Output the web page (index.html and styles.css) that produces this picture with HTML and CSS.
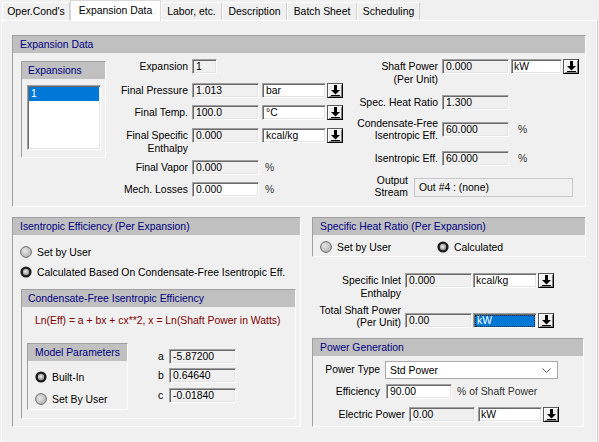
FILE: index.html
```html
<!DOCTYPE html>
<html>
<head>
<meta charset="utf-8">
<link rel="stylesheet" href="styles.css">
</head>
<body>
<svg class="defs" width="0" height="0">
  <defs>
    <radialGradient id="gOff" cx="0.4" cy="0.4" r="0.6">
      <stop offset="0" stop-color="#e6e6e6"/>
      <stop offset="1" stop-color="#b4b4b4"/>
    </radialGradient>
    <radialGradient id="gOn" cx="0.45" cy="0.45" r="0.6">
      <stop offset="0" stop-color="#f0f0f0"/>
      <stop offset="1" stop-color="#8a8a8a"/>
    </radialGradient>
    <symbol id="rOff" viewBox="0 0 12 12">
      <circle cx="6" cy="6" r="5.4" fill="url(#gOff)" stroke="#6e6e6e" stroke-width="1"/>
    </symbol>
    <symbol id="rOn" viewBox="0 0 12 12">
      <circle cx="6" cy="6" r="5.6" fill="#1c1c1c"/>
      <circle cx="6" cy="6" r="3.2" fill="url(#gOn)"/>
    </symbol>
    <symbol id="arr" viewBox="0 0 9 11">
      <rect x="3" y="0" width="3" height="5" fill="#000"/>
      <polygon points="0,5 9,5 4.5,9.5" fill="#000"/>
      <rect x="0" y="10" width="9" height="1" fill="#000"/>
    </symbol>
  </defs>
</svg>

<div class="tabs">
  <div class="tab t1">Oper.Cond's</div>
  <div class="tab t2 active">Expansion Data</div>
  <div class="tab t3">Labor, etc.</div>
  <div class="tab t4">Description</div>
  <div class="tab t5">Batch Sheet</div>
  <div class="tab t6">Scheduling</div>
</div>

<div class="panel">
  <section class="group g-exp">
    <div class="ghead">Expansion Data</div>
    <div class="exp-body">
      <div class="explist">
        <div class="lhead">Expansions</div>
        <div class="listbox"><div class="litem">1</div></div>
      </div>

      <div class="colB">
        <div class="row rb1"><div class="lbl lb">Expansion</div><div class="f fs">1</div></div>
        <div class="row rb2"><div class="lbl lb">Final Pressure</div><div class="f">1.013</div><div class="combo cb">bar</div><div class="btn"><svg width="9" height="11"><use href="#arr"/></svg></div></div>
        <div class="row rb3"><div class="lbl lb">Final Temp.</div><div class="f">100.0</div><div class="combo cb">°C</div><div class="btn"><svg width="9" height="11"><use href="#arr"/></svg></div></div>
        <div class="row rb4"><div class="lbl lb">Final Specific<br>Enthalpy</div><div class="f">0.000</div><div class="combo cb">kcal/kg</div><div class="btn"><svg width="9" height="11"><use href="#arr"/></svg></div></div>
        <div class="row rb5"><div class="lbl lb">Final Vapor</div><div class="f">0.000</div><div class="unit ub">%</div></div>
        <div class="row rb6"><div class="lbl lb">Mech. Losses</div><div class="f w">0.000</div><div class="unit ub">%</div></div>
      </div>

      <div class="colC">
        <div class="row rc1"><div class="lbl lc">Shaft Power<br>(Per Unit)</div><div class="f">0.000</div><div class="combo cc">kW</div><div class="btn"><svg width="9" height="11"><use href="#arr"/></svg></div></div>
        <div class="row rc2"><div class="lbl lc">Spec. Heat Ratio</div><div class="f">1.300</div></div>
        <div class="row rc3"><div class="lbl lc lmid">Condensate-Free<br>Isentropic Eff.</div><div class="f">60.000</div><div class="unit uc">%</div></div>
        <div class="row rc4"><div class="lbl lc">Isentropic Eff.</div><div class="f">60.000</div><div class="unit uc">%</div></div>
        <div class="row rc5"><div class="lbl lout">Output<br>Stream</div><div class="outbox">Out #4 : (none)</div></div>
      </div>
    </div>
  </section>

  <div class="lower">
    <section class="group g-isen">
      <div class="ghead">Isentropic Efficiency (Per Expansion)</div>
      <div class="radio r-i1"><svg width="12" height="12"><use href="#rOff"/></svg><span>Set by User</span></div>
      <div class="radio r-i2"><svg width="12" height="12"><use href="#rOn"/></svg><span>Calculated Based On Condensate-Free Isentropic Eff.</span></div>

      <section class="group g-cf">
        <div class="ghead gh-cf">Condensate-Free Isentropic Efficiency</div>
        <div class="formula">Ln(Eff) = a + bx + cx**2, x = Ln(Shaft Power in Watts)</div>
        <div class="cf-low">
          <section class="group g-mp">
            <div class="ghead">Model Parameters</div>
            <div class="radio r-m1"><svg width="12" height="12"><use href="#rOn"/></svg><span>Built-In</span></div>
            <div class="radio r-m2"><svg width="12" height="12"><use href="#rOff"/></svg><span>Set By User</span></div>
          </section>
          <div class="abc">
            <div class="row ra"><div class="albl">a</div><div class="f">-5.87200</div></div>
            <div class="row rbb"><div class="albl">b</div><div class="f">0.64640</div></div>
            <div class="row rcc"><div class="albl">c</div><div class="f">-0.01840</div></div>
          </div>
        </div>
      </section>
    </section>

    <div class="rcol">
      <section class="group g-shr">
        <div class="ghead">Specific Heat Ratio (Per Expansion)</div>
        <div class="shr-body">
          <div class="radio r-s1"><svg width="12" height="12"><use href="#rOff"/></svg><span>Set by User</span></div>
          <div class="radio r-s2"><svg width="12" height="12"><use href="#rOn"/></svg><span>Calculated</span></div>
        </div>
      </section>

      <div class="row rr1"><div class="lbl lr">Specific Inlet<br>Enthalpy</div><div class="f">0.000</div><div class="combo cr">kcal/kg</div><div class="btn"><svg width="9" height="11"><use href="#arr"/></svg></div></div>
      <div class="row rr2"><div class="lbl lr ltot">Total Shaft Power<br>(Per Unit)</div><div class="f">0.00</div><div class="combo cr sel"><span>kW</span></div><div class="btn"><svg width="9" height="11"><use href="#arr"/></svg></div></div>

      <section class="group g-pg">
        <div class="ghead">Power Generation</div>
        <div class="row rp1"><div class="lbl lp">Power Type</div><div class="select"><span>Std Power</span><svg width="9" height="5"><polyline points="0.5,0.5 4.5,4.5 8.5,0.5" fill="none" stroke="#555" stroke-width="1"/></svg></div></div>
        <div class="row rp2"><div class="lbl lp lp2">Efficiency</div><div class="f w fe">90.00</div><div class="unit up">% of Shaft Power</div></div>
        <div class="row rp3"><div class="lbl lpe">Electric Power</div><div class="f fe">0.00</div><div class="combo cr ce">kW</div><div class="btn"><svg width="9" height="11"><use href="#arr"/></svg></div></div>
      </section>
    </div>
  </div>
</div>
</body>
</html>
```

FILE: styles.css
```css
* { box-sizing: border-box; }

html, body {
  margin: 0;
  padding: 0;
}

body {
  width: 599px;
  height: 442px;
  overflow: hidden;
  background: #f0f0f0;
  font-family: "Liberation Sans", Arial, sans-serif;
  font-size: 10.4px;
  color: #000;
}

.defs { display: block; width: 0; height: 0; overflow: hidden; }

/* ---------- tabs ---------- */
.tabs {
  display: flex;
  height: 20px;
  padding-left: 2px;
  position: relative;
  z-index: 2;
}

.tab {
  height: 18px;
  margin-top: 2px;
  border-top: 1px solid #fff;
  border-left: 1px solid #fff;
  border-right: 1px solid #d0d0d0;
  line-height: 17px;
  text-align: center;
  white-space: nowrap;
  background: #f0f0f0;
}

.tab.active {
  height: 21px;
  margin-top: 0;
  line-height: 19px;
  background: #fff;
  border-color: #d9d9d9;
  border-bottom: none;
}

.t1 { width: 68px; }
.t2 { width: 91px; }
.t3 { width: 61px; }
.t4 { width: 65px; }
.t5 { width: 70px; }
.t6 { width: 63px; }

/* ---------- panel ---------- */
.panel {
  margin-left: 1px;
  width: 596px;
  height: 422px;
  border: 1px solid #fff;
  border-bottom: none;
  box-shadow: 1px 0 0 #cfcfcf;
  padding: 14px 0 0 10px;
}

/* ---------- groups ---------- */
.group {
  border-style: solid;
  border-width: 1px;
  border-color: #a0a0a0 #fff #fff #a0a0a0;
}

.ghead {
  height: 17px;
  background: #c0c0c0;
  color: #000080;
  line-height: 17px;
  padding-left: 7px;
  white-space: nowrap;
}

.g-exp {
  width: 574px;
  height: 172px;
}

.exp-body {
  display: flex;
  align-items: flex-start;
}

/* expansions list */
.explist {
  margin: 8px 0 0 8px;
  width: 85px;
  height: 97px;
  border-style: solid;
  border-width: 1px;
  border-color: #a0a0a0 #fff #fff #a0a0a0;
}

.lhead {
  height: 17px;
  background: #c0c0c0;
  color: #000080;
  line-height: 18px;
  padding-left: 6px;
}

.listbox {
  margin: 6px 0 0 5px;
  width: 74px;
  height: 65px;
  background: #fff;
  border: 1px solid;
  border-color: #a0a0a0 #fff #fff #a0a0a0;
  box-shadow: inset 1px 1px 0 #696969, inset -1px -1px 0 #e3e3e3;
  padding: 1px 1px 0 1px;
}

.litem {
  height: 14px;
  background: #0078d7;
  color: #fff;
  line-height: 14px;
  padding-left: 2px;
}

/* rows & fields */
.row {
  display: flex;
  align-items: flex-start;
}

.lbl {
  text-align: right;
  line-height: 13px;
  padding-top: 1px;
  white-space: nowrap;
}

.f {
  width: 67px;
  height: 15px;
  border: 1px solid;
  border-color: #a0a0a0 #fff #fff #a0a0a0;
  box-shadow: inset 1px 1px 0 #696969, inset -1px -1px 0 #e3e3e3;
  background: #f0f0f0;
  line-height: 14px;
  padding-left: 3px;
  white-space: nowrap;
  overflow: hidden;
}

.f.w { background: #fff; }

.combo {
  height: 15px;
  border: 1px solid;
  border-color: #a0a0a0 #fff #fff #a0a0a0;
  box-shadow: inset 1px 1px 0 #696969, inset -1px -1px 0 #e3e3e3;
  background: #fff;
  line-height: 14px;
  padding-left: 3px;
  white-space: nowrap;
}

.combo.sel {
  padding: 1px;
  background: #fff;
}

.combo.sel span {
  display: block;
  height: 12px;
  line-height: 12px;
  background: #0078d7;
  color: #fff;
  outline: 1px dotted #222;
  outline-offset: -1px;
  padding-left: 2px;
}

.btn {
  width: 16px;
  height: 15px;
  margin-left: 1px;
  border: 1px solid;
  border-color: #5a5a5a #000 #000 #5a5a5a;
  box-shadow: inset 1px 1px 0 #fff, inset -1px -1px 0 #808080;
  background: #f0f0f0;
  display: flex;
  align-items: center;
  justify-content: center;
}

.btn svg { display: block; }

.unit {
  line-height: 13px;
  padding-top: 1px;
  color: #333;
}

/* column B */
.colB { padding-top: 6px; }
.lb { width: 82px; margin-right: 4px; }
.fs { width: 25px; }
.cb { width: 64px; margin-left: 3px; }
.ub { margin-left: 6px; }
.rb1 { height: 24px; }
.rb2 { height: 22px; }
.rb3 { height: 23px; }
.rb4 { height: 32px; }
.rb5 { height: 22px; }
.rb6 { height: 15px; }

/* column C */
.colC { padding-top: 6px; }
.lc { width: 95px; margin-right: 4px; }
.cc { width: 51px; margin-left: 2px; padding-left: 2px; }
.uc { margin-left: 9px; }
.rc1 { height: 36px; }
.rc2 { height: 27px; }
.rc3 { height: 29px; }
.rc4 { height: 27px; }
.lmid { line-height: 12px; padding-top: 0; margin-top: -4px; }

.lout {
  width: 65px;
  margin-right: 6px;
  line-height: 12px;
  padding-top: 0;
  margin-top: -3px;
}

.outbox {
  width: 159px;
  height: 19px;
  border: 1px solid #c8c8c8;
  background: #f0f0f0;
  line-height: 17px;
  padding-left: 4px;
}

/* ---------- lower area ---------- */
.lower {
  display: flex;
  align-items: flex-start;
  margin-top: 10px;
}

.radio {
  display: flex;
  align-items: center;
  height: 14px;
  white-space: nowrap;
}

.radio svg { display: block; flex: none; margin-right: 5px; }

.g-isen {
  width: 289px;
  height: 210px;
}

.r-i1 { margin: 10px 0 0 7px; }
.r-i2 { margin: 6px 0 0 7px; }

.g-cf {
  margin: 10px 0 0 8px;
  width: 275px;
  height: 130px;
}

.gh-cf { padding-left: 6px; }

.formula {
  margin-top: 7px;
  padding-left: 13px;
  line-height: 13px;
  color: #800000;
  white-space: nowrap;
}

.cf-low {
  display: flex;
  align-items: flex-start;
  margin-top: 16px;
}

.g-mp {
  margin-left: 5px;
  width: 101px;
  height: 67px;
}

.r-m1 { margin: 9px 0 0 7px; }
.r-m2 { margin: 8px 0 0 7px; }

.abc {
  margin-left: 30px;
  padding-top: 6px;
}

.albl {
  width: 11px;
  line-height: 13px;
  padding-top: 1px;
}

.ra { height: 19px; }
.rbb { height: 20px; }
.rcc { height: 15px; }

/* right column */
.rcol {
  margin-left: 11px;
  width: 274px;
}

.g-shr {
  width: 274px;
  height: 40px;
}

.shr-body {
  display: flex;
  margin-top: 5px;
  padding-left: 7px;
}

.r-s1 { width: 117px; }

.lr { width: 89px; margin-right: 4px; }
.cr { width: 64px; margin-left: 1px; padding-left: 2px; }

.rr1 { margin-top: 16px; height: 15px; }
.rr2 { margin-top: 25px; height: 15px; }
.ltot { line-height: 12px; padding-top: 0; margin-top: -8px; }

.g-pg {
  margin-top: 10px;
  width: 272px;
  height: 89px;
}

.lp { width: 67px; margin-right: 5px; }
.lp2 { margin-right: 6px; }

.rp1 { margin-top: 5px; height: 18px; }
.rp1 .lp { line-height: 18px; padding-top: 0; }

.select {
  width: 173px;
  height: 18px;
  border: 1px solid #a8a8a8;
  background: #fff;
  display: flex;
  align-items: center;
  justify-content: space-between;
  padding: 0 6px 0 4px;
}

.select svg { display: block; }

.rp2 { margin-top: 5px; height: 15px; }
.fe { width: 66px; }
.up { margin-left: 5px; }

.rp3 { margin-top: 8px; height: 15px; }
.lpe { width: 92px; margin-right: 4px; }
.ce { margin-left: 3px; }
```
